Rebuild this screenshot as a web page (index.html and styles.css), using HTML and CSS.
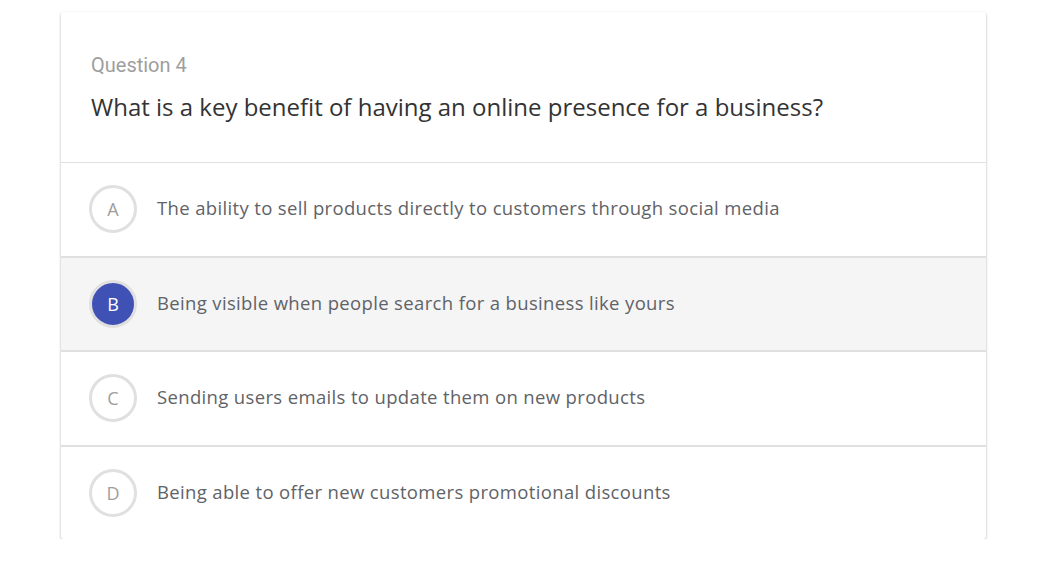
FILE: index.html
```html
<!DOCTYPE html>
<html lang="en">
<head>
<meta charset="utf-8">
<title>Question 4</title>
<link rel="stylesheet" href="styles.css">
</head>
<body>
<div class="card">
  <div class="header">
    <div class="qnum">Question 4</div>
    <div class="qtitle">What is a key benefit of having an online presence for a business?</div>
  </div>
  <div class="option">
    <div class="letter">A</div>
    <div class="otext">The ability to sell products directly to customers through social media</div>
  </div>
  <div class="option selected">
    <div class="letter">B</div>
    <div class="otext">Being visible when people search for a business like yours</div>
  </div>
  <div class="option">
    <div class="letter">C</div>
    <div class="otext">Sending users emails to update them on new products</div>
  </div>
  <div class="option">
    <div class="letter">D</div>
    <div class="otext">Being able to offer new customers promotional discounts</div>
  </div>
</div>
</body>
</html>
```
FILE: styles.css
```css
html, body {
  margin: 0;
  padding: 0;
  background: #ffffff;
}
body {
  padding-top: 12px;
  font-family: Roboto, "Liberation Sans", sans-serif;
}
.card {
  margin-left: 61px;
  width: 925px;
  background: #fff;
  border-radius: 2px;
  box-shadow: 0 1px 3px rgba(0,0,0,0.2), 0 2px 2px rgba(0,0,0,0.14), 0 3px 1px -2px rgba(0,0,0,0.22);
}
.header {
  padding: 40px 30px 30px 30px;
  border-bottom: 1px solid #e0e0e0;
  height: 80px;
}
.qnum {
  font-size: 20px;
  line-height: 26px;
  color: #9e9e9e;
}
.qtitle {
  margin-top: 13px;
  font-family: "Open Sans", Roboto, sans-serif;
  font-size: 24px;
  line-height: 32px;
  color: #333;
}
.option {
  display: flex;
  align-items: center;
  gap: 20px;
  height: 92.5px;
  padding: 0 28px;
  border-bottom: 2px solid #e0e0e0;
}
.option:last-child {
  border-bottom: none;
}
.option.selected {
  background: #f5f5f5;
}
.letter {
  box-sizing: border-box;
  width: 48px;
  height: 48px;
  border-radius: 50%;
  border: 3px solid #e0e0e0;
  display: flex;
  align-items: center;
  justify-content: center;
  font-family: "Open Sans", Roboto, sans-serif;
  font-size: 18px;
  color: #9e9e9e;
  background: #fff;
}
.selected .letter {
  background: #3f51b5;
  color: #fff;
}
.otext {
  font-family: "Open Sans", Roboto, sans-serif;
  font-size: 18.5px;
  line-height: 24px;
  padding-bottom: 2px;
  letter-spacing: 0.35px;
  color: #5f6368;
}
```
